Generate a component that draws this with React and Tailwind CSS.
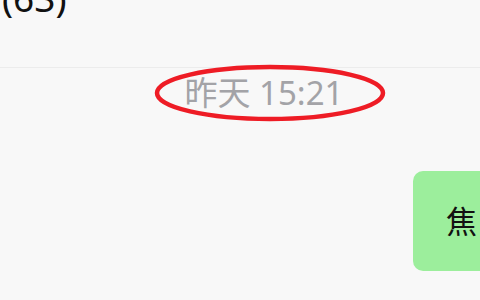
import React from 'react';

const App = () => {
  return (
    <div
      className="w-[480px] h-[300px] overflow-hidden bg-[#f8f8f8] relative"
      style={{ fontFamily: '"Noto Sans", "Noto Sans CJK SC", sans-serif' }}
    >
      {/* header */}
      <div className="h-[68px] border-b border-[#ececec] bg-[#f8f8f8] flex flex-col">
        <div className="-mt-[22px] pl-[2px] text-[37px] leading-[40px] text-[#111]">(63)</div>
      </div>

      {/* time stamp */}
      <div className="flex justify-center pt-[6px] pl-[48px]">
        <span className="text-[33px] leading-[38px] text-[#a3a3a7]">昨天 15:21</span>
      </div>

      {/* message */}
      <div className="flex justify-end mt-[59px]">
        <div className="w-[80px] h-[100px] -mr-[13px] rounded-[10px] bg-[#9cee9c] flex items-center pl-[33px]">
          <span className="text-[31px] leading-[36px] text-[#111]">焦</span>
        </div>
      </div>

      {/* annotation */}
      <svg className="absolute left-0 top-0 pointer-events-none" width="480" height="300">
        <ellipse cx="270" cy="93" rx="113" ry="26" fill="none" stroke="#ee1c25" strokeWidth="4.5" />
      </svg>
    </div>
  );
};

export default App;
